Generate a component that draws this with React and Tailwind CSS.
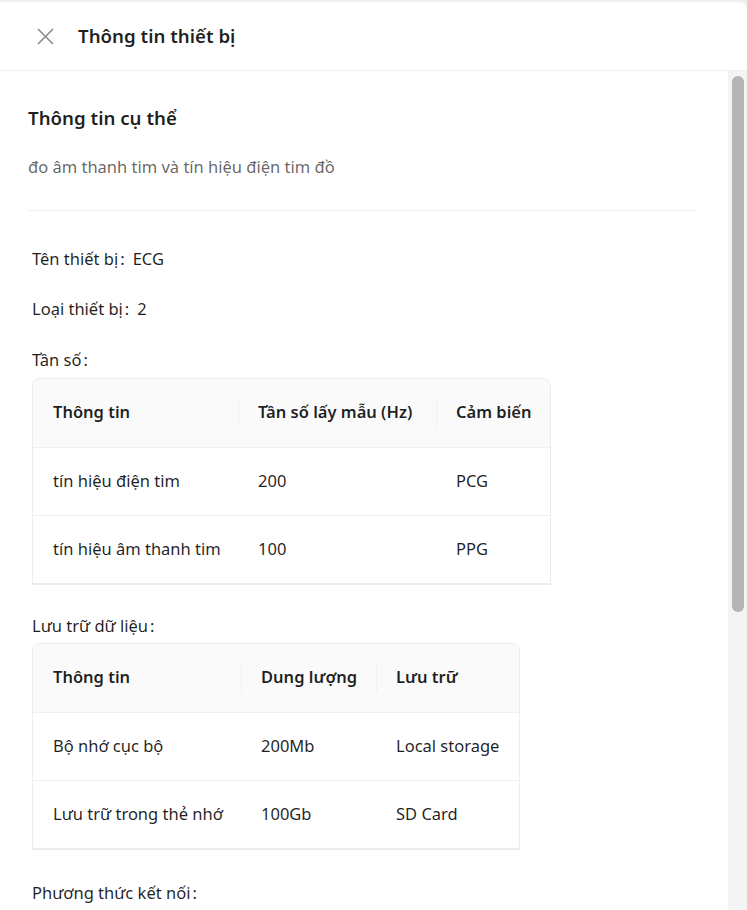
import React from "react";

// Device info drawer: summary, frequency table, storage table.
const freqRows = [
  ["tín hiệu điện tim", "200", "PCG"],
  ["tín hiệu âm thanh tim", "100", "PPG"],
];

const storageRows = [
  ["Bộ nhớ cục bộ", "200Mb", "Local storage"],
  ["Lưu trữ trong thẻ nhớ", "100Gb", "SD Card"],
];

export default function App() {
  return (
    <div
      className="h-screen w-full bg-[#f0f0f0] pt-[2px] text-[rgba(0,0,0,0.88)]"
      style={{ fontFamily: '"Noto Sans", "Open Sans", sans-serif' }}
    >
      <div className="flex h-full flex-col overflow-hidden rounded-tr-lg bg-white">
        {/* Header */}
        <div className="flex h-[69px] shrink-0 items-center border-b border-[#f0f0f0] pl-[37px]">
          <button className="mr-[24px] text-[#8c8c8c]">
            <svg width="17" height="17" viewBox="0 0 17 17" fill="none">
              <path d="M1 1L16 16M16 1L1 16" stroke="currentColor" strokeWidth="1.6" />
            </svg>
          </button>
          <div className="text-[18.7px] font-semibold">Thông tin thiết bị</div>
        </div>

        <div className="flex min-h-0 flex-1">
          {/* Body */}
          <div className="min-w-0 flex-1 overflow-hidden pb-10 pl-[28px] pr-[31px]">
            <div className="pt-[34px] text-[18.7px] font-semibold leading-[26px]">Thông tin cụ thể</div>
            <div className="mt-[24px] text-[16.5px] leading-[24px] text-[rgba(0,0,0,0.62)]">
              đo âm thanh tim và tín hiệu điện tim đồ
            </div>
            <div className="mt-[31px] border-t border-[#f0f0f0]" />

            <div className="pl-[4px] text-[16.5px]">
              <Field label="Tên thiết bị" value="ECG" className="mt-[36px]" />
              <Field label="Loại thiết bị" value="2" className="mt-[26px]" />

              <Field label="Tần số" className="mt-[27px]" />
              <Table
                className="mt-[6px] w-[519px]"
                widths={["205px", "198px", "116px"]}
                head={["Thông tin", "Tần số lấy mẫu (Hz)", "Cảm biến"]}
                rows={freqRows}
              />

              <Field label="Lưu trữ dữ liệu" className="mt-[29px]" />
              <Table
                className="mt-[5px] w-[488px]"
                widths={["208px", "135px", "145px"]}
                head={["Thông tin", "Dung lượng", "Lưu trữ"]}
                rows={storageRows}
              />

              <Field label="Phương thức kết nối" className="mt-[31px]" />
            </div>
          </div>

          {/* Scrollbar */}
          <div className="w-[19px] shrink-0 bg-[#f4f4f4] pl-[4px] pt-[5px]">
            <div className="h-[536px] w-[12px] rounded-full bg-[#b5b5b5]" />
          </div>
        </div>
      </div>
    </div>
  );
}

function Field({ label, value, className = "" }) {
  return (
    <div className={`flex h-[24px] items-center leading-[24px] ${className}`}>
      <span>{label}</span>
      <span className="ml-[2px] mr-[8px]">:</span>
      {value && <span>{value}</span>}
    </div>
  );
}

function Table({ head, rows, widths, className = "" }) {
  return (
    <div className={`overflow-hidden rounded-t-lg border border-b-2 border-[#ececec] ${className}`}>
      <table className="w-full table-fixed border-collapse text-left text-[16.5px]">
        <colgroup>
          {widths.map((w, i) => (
            <col key={i} style={{ width: w }} />
          ))}
        </colgroup>
        <thead>
          <tr className="h-[68px] border-b border-[#f0f0f0] bg-[#fafafa]">
            {head.map((h, i) => (
              <th
                key={h}
                className={`relative pl-[20px] font-semibold ${
                  i > 0
                    ? "before:absolute before:left-0 before:top-1/2 before:h-[28px] before:w-px before:-translate-y-1/2 before:bg-[#f0f0f0] before:content-['']"
                    : ""
                }`}
              >
                {h}
              </th>
            ))}
          </tr>
        </thead>
        <tbody>
          {rows.map((r, ri) => (
            <tr
              key={ri}
              className={`h-[68px] ${ri < rows.length - 1 ? "border-b border-[#f0f0f0]" : ""}`}
            >
              {r.map((c, ci) => (
                <td key={ci} className="whitespace-nowrap pl-[20px]">
                  {c}
                </td>
              ))}
            </tr>
          ))}
        </tbody>
      </table>
    </div>
  );
}
